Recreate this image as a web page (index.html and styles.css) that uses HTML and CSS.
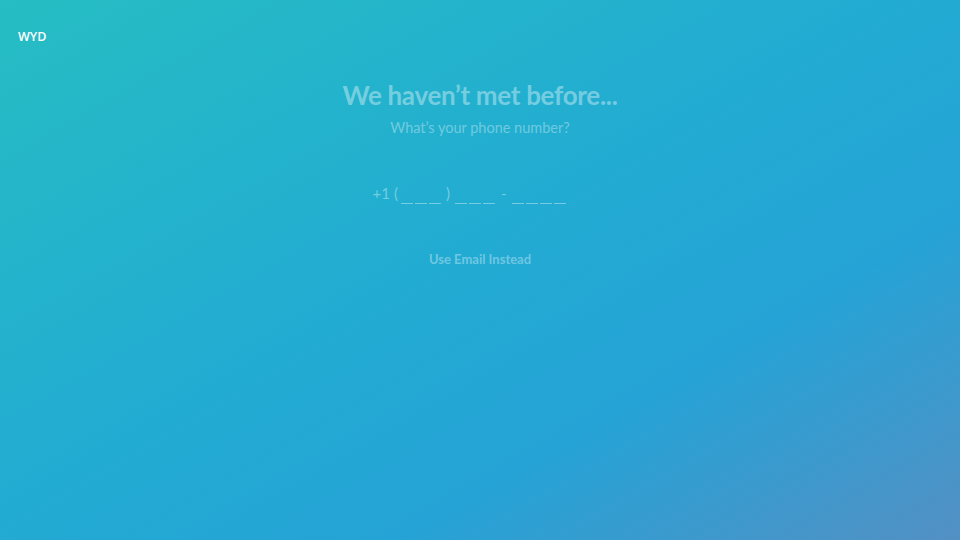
FILE: index.html
```html
<!DOCTYPE html>
<html>
<head>
<meta charset="utf-8">
<link rel="stylesheet" href="styles.css">
</head>
<body>
<div class="page">
  <header class="brand">WYD</header>
  <main class="content">
    <h1 class="title">We haven’t met before...</h1>
    <p class="subtitle">What’s your phone number?</p>
    <div class="phone">
      <span class="prefix">+1</span>
      <span class="paren">(</span>
      <span class="slots"><span class="slot">_</span><span class="slot">_</span><span class="slot">_</span></span>
      <span class="paren close">)</span>
      <span class="slots"><span class="slot">_</span><span class="slot">_</span><span class="slot">_</span></span>
      <span class="dash">-</span>
      <span class="slots"><span class="slot">_</span><span class="slot">_</span><span class="slot">_</span><span class="slot">_</span></span>
    </div>
    <button class="alt">Use Email Instead</button>
  </main>
</div>
</body>
</html>
```
FILE: styles.css
```css
html, body {
  margin: 0;
  padding: 0;
  width: 960px;
  height: 540px;
  overflow: hidden;
}
.page {
  width: 960px;
  height: 540px;
  background: linear-gradient(150deg, #26bdc3 0%, #22acd2 45%, #25a3d6 70%, #5390c4 100%);
  font-family: Lato, "Open Sans", sans-serif;
  position: relative;
}
.brand {
  padding: 30px 0 0 18px;
  font-family: "Open Sans", sans-serif;
  font-weight: 600;
  font-size: 12.5px;
  color: #ffffff;
  line-height: 14px;
}
.content {
  display: flex;
  flex-direction: column;
  align-items: center;
  padding-top: 34px;
}
.title {
  margin: 0;
  font-size: 26px;
  font-weight: 700;
  color: rgba(255, 255, 255, 0.38);
  line-height: 34px;
  letter-spacing: -0.3px;
}
.subtitle {
  margin: 7px 0 0;
  font-size: 14.5px;
  color: rgba(255, 255, 255, 0.36);
  line-height: 18px;
}
.phone {
  margin-top: 46px;
  margin-right: 22px;
  display: flex;
  align-items: flex-start;
  font-size: 15px;
  color: rgba(255, 255, 255, 0.38);
  line-height: 20px;
  height: 27px;
}
.prefix {
  margin-right: 4px;
}
.paren {
  margin-right: 3px;
}
.close {
  margin-left: 5px;
  margin-right: 5px;
}
.dash {
  margin: 0 5px 0 6px;
}
.slots {
  display: flex;
  gap: 2px;
  padding-top: 3px;
}
.slot {
  display: block;
  width: 12px;
  height: 18px;
  overflow: hidden;
  color: transparent;
  border-bottom: 1.5px solid rgba(255, 255, 255, 0.38);
  box-sizing: border-box;
}
.alt {
  margin-top: 41px;
  background: none;
  border: none;
  padding: 0;
  font-family: Lato, sans-serif;
  font-weight: 700;
  font-size: 13px;
  color: rgba(255, 255, 255, 0.36);
  line-height: 16px;
}
```
